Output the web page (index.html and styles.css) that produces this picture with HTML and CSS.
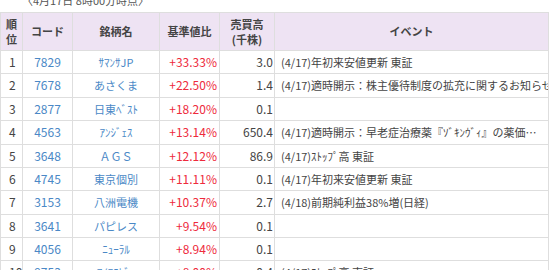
FILE: index.html
```html
<!DOCTYPE html>
<html lang="ja">
<head>
<meta charset="utf-8">
<link rel="stylesheet" href="styles.css">
</head>
<body>
<div class="caption">〈4月17日 8時00分時点〉</div>
<table class="rank">
  <colgroup>
    <col class="c-rank"><col class="c-code"><col class="c-name"><col class="c-pct"><col class="c-vol"><col class="c-ev">
  </colgroup>
  <thead>
    <tr>
      <th>順<br>位</th>
      <th>コード</th>
      <th>銘柄名</th>
      <th>基準値比</th>
      <th>売買高<br>(千株)</th>
      <th>イベント</th>
    </tr>
  </thead>
  <tbody>
    <tr><td class="no">1</td><td class="code">7829</td><td class="name">ｻﾏﾝｻJP</td><td class="pct">+33.33%</td><td class="vol">3.0</td><td class="ev">(4/17)年初来安値更新 東証</td></tr>
    <tr><td class="no">2</td><td class="code">7678</td><td class="name">あさくま</td><td class="pct">+22.50%</td><td class="vol">1.4</td><td class="ev">(4/17)適時開示：株主優待制度の拡充に関するお知らせ</td></tr>
    <tr><td class="no">3</td><td class="code">2877</td><td class="name">日東ﾍﾞｽﾄ</td><td class="pct">+18.20%</td><td class="vol">0.1</td><td class="ev"></td></tr>
    <tr><td class="no">4</td><td class="code">4563</td><td class="name">ｱﾝｼﾞｪｽ</td><td class="pct">+13.14%</td><td class="vol">650.4</td><td class="ev">(4/17)適時開示：早老症治療薬『ｿﾞｷﾝｳﾞｨ』の薬価…</td></tr>
    <tr><td class="no">5</td><td class="code">3648</td><td class="name">ＡＧＳ</td><td class="pct">+12.12%</td><td class="vol">86.9</td><td class="ev">(4/17)ｽﾄｯﾌﾟ高 東証</td></tr>
    <tr><td class="no">6</td><td class="code">4745</td><td class="name">東京個別</td><td class="pct">+11.11%</td><td class="vol">0.1</td><td class="ev">(4/17)年初来安値更新 東証</td></tr>
    <tr><td class="no">7</td><td class="code">3153</td><td class="name">八洲電機</td><td class="pct">+10.37%</td><td class="vol">2.7</td><td class="ev">(4/18)前期純利益38%増(日経)</td></tr>
    <tr><td class="no">8</td><td class="code">3641</td><td class="name">パピレス</td><td class="pct">+9.54%</td><td class="vol">0.1</td><td class="ev"></td></tr>
    <tr><td class="no">9</td><td class="code">4056</td><td class="name">ﾆｭｰﾗﾙ</td><td class="pct">+8.94%</td><td class="vol">0.1</td><td class="ev"></td></tr>
    <tr><td class="no">10</td><td class="code">9753</td><td class="name">ｱｲｴｽﾋﾞｰ</td><td class="pct">+8.00%</td><td class="vol">0.4</td><td class="ev">(4/17)ｽﾄｯﾌﾟ高 東証</td></tr>
  </tbody>
</table>
</body>
</html>
```
FILE: styles.css
```css
html, body {
  margin: 0;
  padding: 0;
  background: #fff;
}
body {
  font-family: "Noto Sans CJK JP", "Noto Sans", sans-serif;
  color: #444;
  overflow: hidden;
}
.caption {
  font-size: 11px;
  line-height: 12px;
  margin: -6px 0 0 22px;
  color: #555;
  height: 12px;
}
.rank {
  margin-top: 6px;
  border-collapse: collapse;
  table-layout: fixed;
  width: 549px;
  font-size: 12px;
}
.c-rank { width: 22px; }
.c-code { width: 50px; }
.c-name { width: 87px; }
.c-pct { width: 60px; }
.c-vol { width: 55px; }
.c-ev { width: 274px; }
.rank th, .rank td {
  border: 1px solid #dedede;
  white-space: nowrap;
  overflow: hidden;
}
.rank th {
  background: #eee3f3;
  font-weight: bold;
  font-size: 11px;
  line-height: 15px;
  padding: 3px 0 3px;
  color: #444;
  height: 31px;
}
.rank td {
  padding: 2px 2px;
  line-height: 18.375px;
  height: 18.375px;
}
.rank td.no {
  text-align: left;
  padding-left: 8px;
  color: #444;
}
.rank td.code {
  text-align: center;
  color: #4a88c6;
}
.rank td.name {
  text-align: center;
  color: #4a88c6;
  font-size: 11px;
}
.rank td.pct {
  text-align: right;
  color: #ee2a3c;
  padding-right: 2px;
}
.rank td.vol {
  text-align: right;
  padding-right: 1px;
  color: #444;
}
.rank td.ev {
  text-align: left;
  padding-left: 6px;
  color: #444;
  font-size: 11px;
  text-overflow: clip;
}
```
